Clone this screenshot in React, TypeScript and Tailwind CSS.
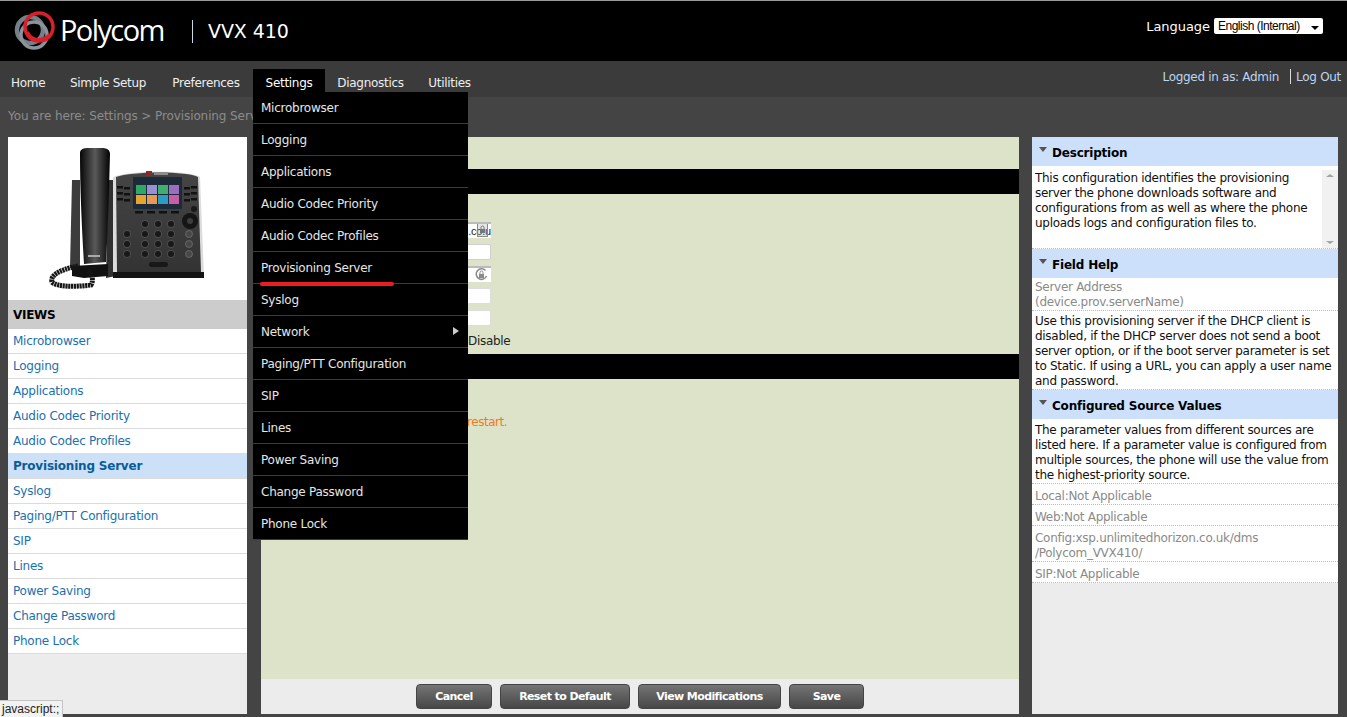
const navItems = [
  { label: 'Home', width: 'w-[57px] pl-[11px] justify-start' },
  { label: 'Simple Setup', width: 'w-[102px] justify-center' },
  { label: 'Preferences', width: 'w-[94px] justify-center' },
  { label: 'Settings', width: 'w-[72px] justify-center' },
  { label: 'Diagnostics', width: 'w-[91px] justify-center' },
  { label: 'Utilities', width: 'w-[67px] justify-center' },
];

const views = [
  'Microbrowser',
  'Logging',
  'Applications',
  'Audio Codec Priority',
  'Audio Codec Profiles',
  'Provisioning Server',
  'Syslog',
  'Paging/PTT Configuration',
  'SIP',
  'Lines',
  'Power Saving',
  'Change Password',
  'Phone Lock',
];

const menuItems = [
  'Microbrowser',
  'Logging',
  'Applications',
  'Audio Codec Priority',
  'Audio Codec Profiles',
  'Provisioning Server',
  'Syslog',
  'Network',
  'Paging/PTT Configuration',
  'SIP',
  'Lines',
  'Power Saving',
  'Change Password',
  'Phone Lock',
];

const buttons = [
  { label: 'Cancel', width: 'w-[76px]' },
  { label: 'Reset to Default', width: 'w-[130px]' },
  { label: 'View Modifications', width: 'w-[143px]' },
  { label: 'Save', width: 'w-[75px]' },
];

const Logo = () => (
  <svg width="46" height="42" viewBox="14 7 46 42" className="shrink-0 mb-[3px]">
    <circle cx="30" cy="28" r="13" fill="none" stroke="#77808a" strokeWidth="4.5" />
    <circle cx="34" cy="33" r="13" fill="none" stroke="#8b939b" strokeWidth="3.5" />
    <circle cx="39" cy="25" r="14" fill="none" stroke="#d8202a" strokeWidth="3.5" />
    <path d="M27 30 C31 40 43 40 50 33" fill="none" stroke="#d8202a" strokeWidth="4" />
  </svg>
);

const PhoneImage = () => {
  const tiles = ['#2fa765', '#9a8fd0', '#3fae6e', '#9a6fc0', '#e6a52e', '#e89a55', '#2d9cc4', '#c65fa8'];
  const keyX = [145, 158, 171];
  const keyY = [224, 234, 244, 254];
  return (
    <svg width="239" height="163" viewBox="8 137 239 163" className="blur-[0.4px]">
      <defs>
        <linearGradient id="handset" x1="0" x2="1" y1="0" y2="0">
          <stop offset="0" stopColor="#060606" />
          <stop offset="0.5" stopColor="#5a5a5a" />
          <stop offset="1" stopColor="#030303" />
        </linearGradient>
        <linearGradient id="body" x1="0" x2="0" y1="0" y2="1">
          <stop offset="0" stopColor="#454545" />
          <stop offset="1" stopColor="#333" />
        </linearGradient>
      </defs>
      <path d="M72 180 L80 180 L80 268 L70 268 Z" fill="#3c3c3c" />
      <path d="M108 180 L116 180 L116 276 L106 278 Z" fill="#303030" />
      <path
        d="M80 153 C80 149 84 148 88 148 L102 148 C107 148 110 150 110 154 C109 190 108 230 106 262 L84 264 C82 230 80 190 80 153 Z"
        fill="url(#handset)"
      />
      <rect x="88" y="255" width="12" height="2" fill="#aaa" />
      <path d="M72 266 L108 264 L108 276 L84 278 L72 276 Z" fill="#111" />
      <path
        d="M78 266 C58 270 50 276 52 282 C56 287 76 287 91 285 C94 280 92 274 88 270"
        fill="none"
        stroke="#161616"
        strokeWidth="5"
        strokeDasharray="2.2 0.6"
      />
      <path d="M113 177 C130 170 190 170 200 177 L204 276 L113 277 Z" fill="#dcdcdc" />
      <path d="M116 177 C132 171 188 171 198 177 L201 272 L117 272 Z" fill="url(#body)" />
      <path d="M113 272 L204 272 L204 278 L113 278 Z" fill="#141414" />
      <rect x="146" y="171" width="6" height="5" fill="#8a2a2a" />
      <rect x="154" y="172" width="14" height="3" fill="#8d8d8d" />
      <rect x="133" y="177" width="49" height="32" fill="#1d2a3a" />
      {tiles.map((color, i) => (
        <rect
          key={color}
          x={136 + (i % 4) * 11}
          y={i < 4 ? 185 : 195}
          width="10"
          height="9"
          fill={color}
        />
      ))}
      {[139, 151, 163, 175].map((x) => (
        <rect key={x} x={x - 4} y="211" width="8" height="2.5" fill="#111" />
      ))}
      {[187, 193, 199].map((y) => (
        <g key={y} fill="#111">
          <rect x="117" y={y - 1} width="6" height="2.5" />
          <rect x="124" y={y} width="6" height="2.5" />
          <rect x="184" y={y} width="6" height="2.5" />
          <rect x="191" y={y - 1} width="6" height="2.5" />
        </g>
      ))}
      <circle cx="190" cy="221" r="8" fill="#151515" />
      <circle cx="190" cy="221" r="3" fill="#3d3d3d" />
      <circle cx="194" cy="209" r="3" fill="#1a1a1a" />
      {keyY.map((y) =>
        keyX.map((x) => <circle key={`${x}-${y}`} cx={x} cy={y} r="3.6" fill="#181818" stroke="#777" strokeWidth="0.5" />),
      )}
      {[234, 244, 254].map((y) => (
        <g key={y}>
          <circle cx="127" cy={y} r="3.6" fill="#181818" stroke="#777" strokeWidth="0.5" />
          <circle cx="189" cy={y} r="3.5" fill="#484848" stroke="#888" strokeWidth="0.5" />
        </g>
      ))}
      <rect x="149" y="262" width="19" height="5" rx="2.5" fill="#181818" />
    </svg>
  );
};

const PanelHead = ({ title }: { title: string }) => (
  <div className="h-[29px] bg-[#cce0fb] flex items-center pl-[7px] gap-[5px] shrink-0">
    <span className="w-0 h-0 border-l-[4px] border-r-[4px] border-t-[5px] border-l-transparent border-r-transparent border-t-[#555] mb-[4px]" />
    <span className="pt-[4px] font-bold text-[12px] text-black tracking-[-0.2px]">{title}</span>
  </div>
);

export default function App() {
  return (
    <div className="relative h-[717px] w-full overflow-hidden bg-[#444444] font-['DejaVu_Sans',Verdana,sans-serif] flex flex-col">
      {/* header */}
      <div className="h-px bg-[#999] shrink-0" />
      <header className="h-[60px] bg-black shrink-0 flex items-center pl-[14px] pr-[24px]">
        <Logo />
        <span className="mb-[3px] font-['Open_Sans',sans-serif] text-[29px] leading-none text-white tracking-[-1.6px] w-[132px]">
          Polycom
        </span>
        <span className="w-px h-[23px] bg-[#c8d8e8]" />
        <span className="ml-[15px] text-[19px] text-white tracking-[-0.1px]">VVX 410</span>
        <div className="ml-auto flex items-center gap-[4px] mb-[10px]">
          <span className="pt-[1px] text-[13px] text-white tracking-[-0.05px]">Language</span>
          <div className="w-[109px] h-[16px] bg-white rounded-[2px] flex items-center justify-between pl-[4px] pr-[4px]">
            <span className="font-['Liberation_Sans',sans-serif] text-[12px] tracking-[-0.5px] text-black">
              English (Internal)
            </span>
            <span className="w-0 h-0 mt-[3px] border-l-[4px] border-r-[4px] border-t-[4px] border-l-transparent border-r-transparent border-t-black" />
          </div>
        </div>
      </header>

      {/* nav */}
      <nav className="h-[36px] bg-[#3b3b3b] shrink-0 flex items-start pt-[8px] pr-[6px] text-[12px] tracking-[-0.3px]">
        {navItems.map((item) =>
          item.label === 'Settings' ? (
            <div key={item.label} className={`relative z-20 ${item.width}`}>
              <div className="h-[23px] bg-black pt-[5px] flex items-center justify-center text-white">{item.label}</div>
              <ul className="absolute top-[23px] left-0 w-[215px] bg-black tracking-[-0.25px]">
                {menuItems.map((m) => (
                  <li
                    key={m}
                    className="relative h-[32px] border-b border-[#3a3a3a] pl-[8px] pt-px flex items-center text-[#e6e6e6]"
                  >
                    {m}
                    {m === 'Network' && (
                      <span className="absolute right-[9px] top-[11px] w-0 h-0 border-t-[4px] border-b-[4px] border-l-[6px] border-t-transparent border-b-transparent border-l-[#ccc]" />
                    )}
                    {m === 'Provisioning Server' && (
                      <span className="absolute left-[7px] top-[30px] w-[134px] h-[4px] rounded-full bg-[#ed1c24]" />
                    )}
                  </li>
                ))}
              </ul>
            </div>
          ) : (
            <div
              key={item.label}
              className={`h-[23px] pt-[5px] flex items-center ${item.width} text-[#eee] whitespace-nowrap`}
            >
              {item.label}
            </div>
          ),
        )}
        <div className="ml-auto flex items-center h-[15px] text-[#bcd6f0]">
          <span>Logged in as: Admin</span>
          <span className="ml-[11px] mr-[5px] w-px h-[15px] bg-[#ddd]" />
          <span>Log Out</span>
        </div>
      </nav>

      {/* breadcrumb */}
      <div className="h-[40px] shrink-0 pl-[8px] pt-[12px] text-[12px] leading-[15px] tracking-[-0.1px] text-[#8c8c8c]">
        You are here: Settings &gt; Provisioning Server
      </div>

      {/* body */}
      <div className="flex-1 min-h-0 flex pl-[8px] pb-[3px]">
        <aside className="w-[239px] shrink-0 bg-[#ececec] flex flex-col">
          <div className="h-[163px] bg-white">
            <PhoneImage />
          </div>
          <div className="h-[29px] bg-[#cccccc] flex items-center pl-[5px] font-bold text-[12px] text-black tracking-[-0.3px]">
            VIEWS
          </div>
          {views.map((v) => (
            <a
              key={v}
              href="#"
              className={`h-[25px] border-b border-[#dcdcdc] pl-[5px] flex items-center text-[12px] ${
                v === 'Provisioning Server'
                  ? 'bg-[#cce0f7] font-bold text-[#0b5c96] tracking-[-0.2px]'
                  : 'bg-white text-[#1b70ae] tracking-[-0.25px]'
              }`}
            >
              {v}
            </a>
          ))}
        </aside>

        <main className="ml-[14px] w-[758px] shrink-0 flex flex-col">
          <div className="flex-1 bg-[#dde3c8] pt-[32px] text-[12px]">
            <div className="h-[25px] bg-black" />
            <div className="ml-[40px] w-[190px] flex flex-col gap-[6px] pt-[28px]">
              <div className="relative h-[16px] bg-white overflow-hidden flex justify-end items-center font-['Liberation_Sans',sans-serif] text-[11px] tracking-[-0.2px] text-[#222] whitespace-nowrap border-t-2 border-[#bbb]">
                m.co.u
                <svg width="11" height="14" viewBox="0 0 11 14" className="absolute right-[3px] -top-[1px]">
                  <rect x="0.5" y="0.5" width="10" height="13" fill="#999" fillOpacity="0.25" stroke="#888" />
                  <rect x="3" y="6" width="5" height="4" fill="#777" />
                  <path d="M4 6 V4.5 a1.5 1.5 0 0 1 3 0 V6" fill="none" stroke="#777" />
                </svg>
              </div>
              <div className="h-[16px] bg-white rounded-[2px] border border-[#cfcfcf]" />
              <div className="relative h-[16px] bg-white border-t-2 border-[#bbb]">
                <svg width="13" height="13" viewBox="0 0 13 13" className="absolute right-[3px] top-0">
                  <path d="M10.5 2.5 A5.3 5.3 0 1 0 11.5 8" fill="none" stroke="#8a8a8a" strokeWidth="1.5" />
                  <rect x="4" y="6" width="5" height="4" fill="#8a8a8a" />
                  <path d="M5 6 V4.5 a1.5 1.5 0 0 1 3 0 V6" fill="none" stroke="#8a8a8a" />
                </svg>
              </div>
              <div className="h-[16px] bg-white rounded-[2px] border border-[#ddd]" />
              <div className="h-[16px] bg-white rounded-[2px] border border-[#ddd]" />
            </div>
            <div className="pl-[207px] pt-[8px] leading-[15px] tracking-[-0.3px] text-[#222]">Disable</div>
            <div className="mt-[5px] h-[25px] bg-black" />
            <div className="pl-[206px] pt-[36px] leading-[15px] tracking-[-0.45px] text-[#ef7a22]">restart.</div>
          </div>
          <div className="h-[35px] shrink-0 bg-[#ececec] flex justify-center items-center gap-[8px]">
            {buttons.map((b) => (
              <button
                key={b.label}
                className={`${b.width} h-[25px] pt-px rounded-[4px] border border-[#444] bg-linear-to-b from-[#757575] to-[#474747] text-white font-bold text-[11px] tracking-[-0.6px]`}
              >
                {b.label}
              </button>
            ))}
          </div>
        </main>

        <aside className="ml-[13px] w-[306px] shrink-0 bg-[#ececec] flex flex-col text-[12px] leading-[15px] tracking-[-0.29px]">
          <PanelHead title="Description" />
          <div className="h-[83px] bg-white border-b border-dotted border-[#bbb] flex shrink-0">
            <p className="flex-1 pl-[3px] pt-[5px] text-[#111]">
              This configuration identifies the provisioning server the phone downloads software and configurations from
              as well as where the phone uploads logs and configuration files to.
            </p>
            <div className="w-[16px] mt-[4px] bg-[#f1f1f1] flex flex-col justify-between items-center py-[4px]">
              <span className="w-0 h-0 border-l-[4px] border-r-[4px] border-b-[3px] border-l-transparent border-r-transparent border-b-[#a3a3a3]" />
              <span className="w-0 h-0 border-l-[4px] border-r-[4px] border-t-[3px] border-l-transparent border-r-transparent border-t-[#a3a3a3]" />
            </div>
          </div>
          <PanelHead title="Field Help" />
          <div className="bg-white border-b border-dotted border-[#bbb] pl-[3px] pt-[2px] text-[#8a8a8a]">
            Server Address
            <br />
            (device.prov.serverName)
          </div>
          <div className="bg-white border-b border-dotted border-[#bbb] pl-[3px] pr-[2px] pt-[3px] text-[#111]">
            Use this provisioning server if the DHCP client is disabled, if the DHCP server does not send a boot server
            option, or if the boot server parameter is set to Static. If using a URL, you can apply a user name and
            password.
          </div>
          <PanelHead title="Configured Source Values" />
          <div className="bg-white border-b border-dotted border-[#bbb] pl-[3px] pr-[2px] pt-[4px] text-[#111]">
            The parameter values from different sources are listed here. If a parameter value is configured from multiple
            sources, the phone will use the value from the highest-priority source.
          </div>
          {['Local:Not Applicable', 'Web:Not Applicable'].map((t) => (
            <div
              key={t}
              className="h-[21px] bg-white border-b border-dotted border-[#bbb] pl-[3px] flex items-end text-[#8a8a8a]"
            >
              {t}
            </div>
          ))}
          <div className="bg-white border-b border-dotted border-[#bbb] pl-[3px] pt-[5px] text-[#8a8a8a]">
            Config:xsp.unlimitedhorizon.co.uk/dms
            <br />
            /Polycom_VVX410/
          </div>
          <div className="h-[21px] bg-white border-b border-dotted border-[#bbb] pl-[3px] flex items-end text-[#8a8a8a]">
            SIP:Not Applicable
          </div>
        </aside>
      </div>

      {/* status tooltip */}
      <div className="absolute left-0 bottom-0 h-[17px] w-[63px] bg-[#f2f2f2] border-t border-r border-[#c4c4c4] pl-[2px] font-['Liberation_Sans',sans-serif] text-[12px] leading-[17px] text-[#222] z-30">
        javascript:;
      </div>
    </div>
  );
}
